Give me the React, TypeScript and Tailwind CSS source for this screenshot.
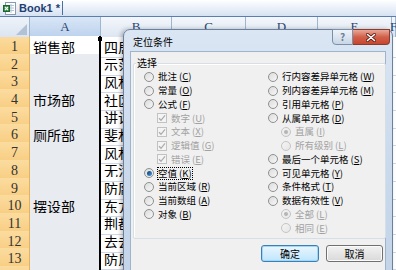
import React from 'react';

type Item = { t: string; k: string; sub?: boolean; checked?: boolean; focus?: boolean; box?: boolean };

const sheetRows: [string, string][] = [
  ['销售部', '四居'],
  ['', '示范'],
  ['', '风林'],
  ['市场部', '社区'],
  ['', '讲说'],
  ['厕所部', '斐林'],
  ['', '风林'],
  ['', '无污'],
  ['', '防腐'],
  ['摆设部', '东方'],
  ['', '荆都'],
  ['', '去去'],
  ['', '防风'],
  ['', ''],
];

const leftItems: Item[] = [
  { t: '批注', k: 'C' },
  { t: '常量', k: 'O' },
  { t: '公式', k: 'F' },
  { t: '数字', k: 'U', sub: true, box: true },
  { t: '文本', k: 'X', sub: true, box: true },
  { t: '逻辑值', k: 'G', sub: true, box: true },
  { t: '错误', k: 'E', sub: true, box: true },
  { t: '空值', k: 'K', checked: true, focus: true },
  { t: '当前区域', k: 'R' },
  { t: '当前数组', k: 'A' },
  { t: '对象', k: 'B' },
];

const rightItems: Item[] = [
  { t: '行内容差异单元格', k: 'W' },
  { t: '列内容差异单元格', k: 'M' },
  { t: '引用单元格', k: 'P' },
  { t: '从属单元格', k: 'D' },
  { t: '直属', k: 'I', sub: true, checked: true },
  { t: '所有级别', k: 'L', sub: true },
  { t: '最后一个单元格', k: 'S' },
  { t: '可见单元格', k: 'Y' },
  { t: '条件格式', k: 'T' },
  { t: '数据有效性', k: 'V' },
  { t: '全部', k: 'L', sub: true, checked: true },
  { t: '相同', k: 'E', sub: true },
];

function Radio({ checked, disabled }: { checked?: boolean; disabled?: boolean }) {
  return (
    <span
      className={
        disabled
          ? 'flex h-[10px] w-[10px] shrink-0 items-center justify-center rounded-full border border-[#c4c4c4] bg-gradient-to-br from-[#f4f4f4] to-[#e6e6e6]'
          : 'flex h-[10px] w-[10px] shrink-0 items-center justify-center rounded-full border border-[#8e8f8f] bg-gradient-to-br from-[#dcdcdc] to-[#f7f7f7]'
      }
    >
      {checked && (
        <span
          className={
            disabled
              ? 'h-[4px] w-[4px] rounded-full bg-[#b5b5b5]'
              : 'h-[5px] w-[5px] rounded-full bg-gradient-to-br from-[#0e3d6b] to-[#4d9ee3]'
          }
        />
      )}
    </span>
  );
}

function Check() {
  return (
    <span className="flex h-[10px] w-[10px] shrink-0 items-center justify-center border border-[#c2c2c2] bg-[#f4f4f4]">
      <svg width="8" height="8" viewBox="0 0 8 8">
        <path d="M1 4.2 L3 6.3 L7 1.3" fill="none" stroke="#adadad" strokeWidth="1.3" />
      </svg>
    </span>
  );
}

function Option({ item }: { item: Item }) {
  const dim = item.sub;
  return (
    <div className={item.sub ? 'flex h-[13.75px] items-center gap-[4px] pl-[13px]' : 'flex h-[13.75px] items-center gap-[4px]'}>
      {item.box ? <Check /> : <Radio checked={item.checked} disabled={dim} />}
      <span
        className={
          item.focus
            ? 'outline outline-1 outline-dotted outline-black leading-[11px] text-black'
            : dim
              ? 'leading-[11px] text-[#a2a2a2]'
              : 'leading-[11px] text-black'
        }
      >
        {item.t}
        <span className="ml-[2px]">
          (<span className="underline">{item.k}</span>)
        </span>
      </span>
    </div>
  );
}

function SheetIcon() {
  return (
    <svg width="13" height="13" viewBox="0 0 13 13">
      <rect x="2.5" y="0.5" width="10" height="12" fill="#fff" stroke="#8a9bb0" />
      <path d="M5 3.5h6M5 6h6M5 8.5h6M8 2v9" stroke="#b5c4d6" />
      <rect x="0.5" y="3.5" width="6" height="6" fill="#2f8b45" stroke="#1d6630" />
      <path d="M2 5l3 3M5 5l-3 3" stroke="#fff" strokeWidth="1.1" />
    </svg>
  );
}

export default function App() {
  return (
    <div className="relative h-[270px] w-[396px] overflow-hidden bg-white font-['Noto_Sans_CJK_SC',sans-serif]">
      {/* tab bar */}
      <div className="flex h-[17px] items-stretch border-b border-[#5b7eaf] bg-gradient-to-b from-white to-[#d6e2f2]">
        <div className="flex w-[62px] items-center gap-[3px] pl-[3px]">
          <SheetIcon />
          <span className="font-['Liberation_Sans',sans-serif] text-[11px] font-bold text-[#1f3f73]">Book1 *</span>
        </div>
        <div className="my-[1px] w-px bg-[#4d6f9f]" />
      </div>

      {/* column headers */}
      <div className="grid h-[19px] grid-cols-[30px_71px_71px_74px_72px_74px_4px] border-b border-[#9eb6ce] font-['Liberation_Serif',serif] text-[13px] text-[#2c4571]">
        <div className="relative border-r border-[#9eb6ce] bg-gradient-to-b from-[#eef3f9] to-[#dbe5f1]">
          <div className="absolute bottom-[2px] right-[2px] h-0 w-0 border-b-[11px] border-l-[11px] border-b-[#b2c2d6] border-l-transparent" />
        </div>
        <div className="flex items-center justify-center border-r border-[#9eb6ce] bg-gradient-to-b from-[#d9e6f6] to-[#bcd2ee]">A</div>
        {['B', 'C', 'D', 'E', 'F'].map((c) => (
          <div key={c} className="flex items-center justify-center border-r border-[#9eb6ce] bg-gradient-to-b from-[#f4f7fb] to-[#dde6f2]">
            {c}
          </div>
        ))}
      </div>

      {/* rows */}
      {sheetRows.map(([a, b], i) => (
        <div key={i} className="grid h-[17.7px] grid-cols-[30px_71px_71px_74px_72px_74px_4px]">
          <div className="flex items-center justify-center border-b border-r border-b-[#eebf72] border-r-[#e3b25f] bg-gradient-to-b from-[#fbdc9f] to-[#f8cc80] font-['Liberation_Serif',serif] text-[14px] text-[#333]">
            {i < 13 ? i + 1 : ''}
          </div>
          <div
            className={
              i === 0
                ? 'relative flex items-center border-b border-r-[2px] border-b-[#d9dde4] border-r-black bg-white pl-[3px] text-[14px] leading-none text-black'
                : 'relative flex items-center border-b border-r-[2px] border-b-[#d9dde4] border-r-black bg-[#e8ebf0] pl-[3px] text-[14px] leading-none text-black'
            }
          >
            {a}
            {i === 0 && <span className="absolute -right-[3px] top-[1px] h-[4px] w-[4px] bg-black" />}
          </div>
          <div className="flex items-center border-b border-r border-[#d0d7e5] pl-[3px] text-[14px] leading-none text-black">
            <span className="block w-[19px] overflow-hidden whitespace-nowrap">{b}</span>
          </div>
          <div className="border-b border-r border-[#d0d7e5]" />
          <div className="border-b border-r border-[#d0d7e5]" />
          <div className="border-b border-r border-[#d0d7e5]" />
          <div className="border-b border-[#d0d7e5]" />
        </div>
      ))}

      {/* dialog */}
      <div className="absolute left-[123px] top-[29px] h-[245px] w-[270px] rounded-t-[7px] border border-[#6a809c] bg-gradient-to-b from-[#dbe6f4] via-[#cbdaed] to-[#c3d4e9] shadow-[-2px_0_4px_rgba(0,0,0,0.25)]">
        <div className="flex h-[21px] items-start justify-between">
          <span className="pl-[9px] pt-[7px] text-[10px] leading-none text-black">定位条件</span>
          <div className="-mt-px flex pr-[2px]">
            <div className="flex h-[16px] w-[21px] items-center justify-center rounded-bl-[4px] border border-[#7b8fa8] bg-gradient-to-b from-[#eef3f9] to-[#c9d6e6] text-[10px] font-bold leading-none text-[#6d7f96]">
              ?
            </div>
            <div className="flex h-[16px] w-[37px] items-center justify-center rounded-br-[4px] border border-l-0 border-[#8a3b30] bg-gradient-to-b from-[#e9a898] via-[#d0604a] to-[#c8452e]">
              <svg width="10" height="9" viewBox="0 0 10 9">
                <path d="M1.5 1.5l7 6M8.5 1.5l-7 6" stroke="#5a1d14" strokeWidth="3" strokeLinecap="round" />
                <path d="M1.5 1.5l7 6M8.5 1.5l-7 6" stroke="#fff" strokeWidth="1.6" strokeLinecap="round" />
              </svg>
            </div>
          </div>
        </div>

        <div className="mx-[6px] h-[224px] border border-[#9fb3cb] bg-[#f0f0f0] text-[9.5px]">
          {/* group box */}
          <div className="relative ml-[2px] mt-[11px] h-[176px] w-[253px] rounded-[2px] border border-[#d5dfe5] shadow-[inset_1px_1px_0_white]">
            <span className="absolute -top-[7px] left-[2px] bg-[#f0f0f0] px-[1px] text-[10px] leading-[12px] text-black">选择</span>
            <div className="grid grid-cols-[124px_1fr] pl-[10px] pt-[6px]">
              <div className="flex flex-col">
                {leftItems.map((it, i) => (
                  <Option key={i} item={it} />
                ))}
              </div>
              <div className="flex flex-col">
                {rightItems.map((it, i) => (
                  <Option key={i} item={it} />
                ))}
              </div>
            </div>
          </div>

          {/* buttons */}
          <div className="mr-[2px] mt-[6px] flex justify-end gap-[7px] text-[10px]">
            <div className="flex h-[17px] w-[58px] items-center justify-center rounded-[3px] border border-[#3c7fb1] bg-gradient-to-b from-[#eaf6fd] to-[#bee6fd] shadow-[inset_0_0_0_1px_#9ed7f9] leading-none text-black">
              确定
            </div>
            <div className="flex h-[17px] w-[57px] items-center justify-center rounded-[3px] border border-[#707070] bg-gradient-to-b from-[#f2f2f2] to-[#d9d9d9] shadow-[inset_0_0_0_1px_#fbfbfb] leading-none text-black">
              取消
            </div>
          </div>
        </div>
      </div>
    </div>
  );
}
